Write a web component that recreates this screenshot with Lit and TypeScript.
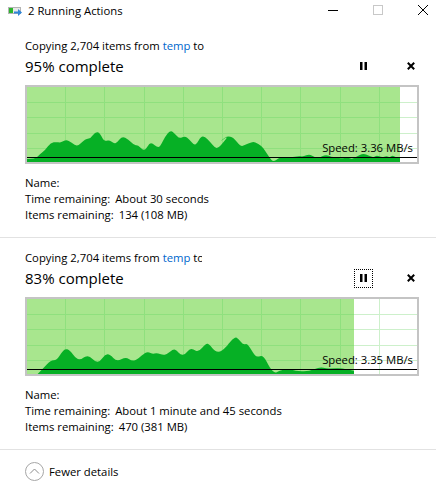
import { LitElement, html, css, svg } from "lit";
import { customElement } from "lit/decorators.js";

type P = [number, number];

const c1: P[] = [
  ...([[20,237],[46,237],[60,222],[76,210],[92,188],[110,186],[120,188],[135,181],[145,181],[165,196],[175,197],[190,182],[200,176],[212,175],[225,157],[238,156],[250,180],[258,183],[268,180],[282,191],[292,187],[306,169],[325,178],[342,196],[354,195],[368,210],[378,208],[388,190],[398,190],[410,201],[420,201],[435,170],[452,150],[465,162],[478,176],[495,168],[508,178],[522,195],[530,192],[543,169],[555,170],[570,185],[585,204],[595,204],[610,187],[625,168]] as P[]).map(([x, y]): P => [20 + x / 3, 80 + y / 3]),
  ...([[0,185],[8,178],[22,168],[40,172],[62,200],[75,195],[95,186],[105,186],[125,198],[135,212],[148,232],[160,246],[175,235],[190,230],[215,232],[235,228],[250,230],[268,222],[285,232],[295,235],[318,223],[335,232],[350,230],[362,236],[385,232],[395,238],[412,228],[430,220],[450,228],[462,232],[470,226],[485,232],[500,228],[510,232],[518,226],[526,232],[540,232]] as P[]).map(([x, y]): P => [220 + x / 3, 80 + y / 3]),
].map(([x, y]): P => [x - 25, y - 85]);

const c2: P[] = [
  ...([[50,240],[70,220],[92,196],[110,196],[125,172],[135,162],[148,164],[170,193],[185,193],[195,184],[210,184],[225,200],[240,200],[255,178],[270,178],[290,200],[318,186],[335,198],[350,195],[380,168],[395,177],[412,174],[428,180],[440,178],[460,162],[470,166],[482,180],[495,179],[508,162],[520,162],[535,172],[558,145],[568,148],[585,170],[605,170],[630,142]] as P[]).map(([x, y]): P => [20 + x / 3, 295 + y / 3]),
  ...([[20,258],[45,230],[55,236],[70,255],[82,250],[100,280],[110,292],[130,285],[150,325],[165,340],[175,333],[205,326],[225,332],[265,335],[300,320],[320,326],[340,325],[365,325],[401,332]] as P[]).map(([x, y]): P => [220 + x / 3, 260 + y / 3]),
].map(([x, y]): P => [x - 25, y - 297]);

const VX = [65, 104, 144, 183, 222, 261, 300, 340, 379].map((x) => x - 25 + 0.5);
const HY = [17, 32, 48, 63].map((y) => y + 0.5);

/* Rounds the sampled outline by running quadratic curves through segment midpoints. */
function smooth(points: P[], greenEnd: number, bottom: number) {
  const f = (n: number) => n.toFixed(1);
  const [first] = points;
  const last = points[points.length - 1];
  let d = `M${f(first[0])} ${bottom}L${f(first[0])} ${f(first[1])}`;
  for (let i = 1; i < points.length - 1; i++) {
    const [x, y] = points[i];
    const [nx, ny] = points[i + 1];
    d += `Q${f(x)} ${f(y)} ${f((x + nx) / 2)} ${f((y + ny) / 2)}`;
  }
  d += `L${f(last[0])} ${f(last[1])}L${greenEnd} ${f(last[1])}L${greenEnd} ${bottom}Z`;
  return d;
}

function chart(points: P[], greenEnd: number) {
  const bottom = 77;
  return html`<svg class="plot" width="394" height="79" viewBox="0 0 394 79">
    ${VX.map((x) => svg`<line x1=${x} x2=${x} y1="2" y2="77" stroke="#cdf0cb" />`)}
    ${HY.map((y) => svg`<line x1="2" x2="392" y1=${y} y2=${y} stroke="#cdf0cb" />`)}
    <rect x="2" y="2" width=${greenEnd - 2} height="75" fill="#a8e68e" />
    ${VX.filter((x) => x < greenEnd).map((x) => svg`<line x1=${x} x2=${x} y1="2" y2="77" stroke="#8fe07e" />`)}
    ${HY.map((y) => svg`<line x1="2" x2=${greenEnd} y1=${y} y2=${y} stroke="#8fe07e" />`)}
    <path d=${smooth(points, greenEnd, bottom)} fill="#06b025" />
    <line x1="2" x2="393" y1="72.5" y2="72.5" stroke="#000" />
  </svg>`;
}

interface Action {
  percent: number;
  clip: number;
  speed: string;
  time: string;
  items: string;
  points: P[];
  greenEnd: number;
  focused: boolean;
}

const ACTIONS: Action[] = [
  { percent: 95, clip: 182, speed: "3.36 MB/s", time: "About 30 seconds", items: "134 (108 MB)", points: c1, greenEnd: 375, focused: false },
  { percent: 83, clip: 177, speed: "3.35 MB/s", time: "About 1 minute and 45 seconds", items: "470 (381 MB)", points: c2, greenEnd: 329, focused: true },
];

@customElement("app-root")
export class AppRoot extends LitElement {
  static styles = css`
    :host {
      display: block;
      width: 436px;
      height: 487px;
      background: #fff;
      color: #000;
      font-family: "Open Sans", "Noto Sans", sans-serif;
      font-size: 11.3px;
      line-height: 16px;
      overflow: hidden;
    }
    .titlebar {
      display: flex;
      height: 26px;
      padding: 3px 8px 0 8px;
      box-sizing: border-box;
    }
    .app-icon {
      margin-top: 4px;
    }
    .title {
      margin-left: 5px;
      height: 16px;
    }
    .win {
      margin-left: auto;
      display: flex;
      gap: 35px;
      margin-top: 2px;
      align-items: flex-start;
    }
    .action {
      padding: 12px 0 14px 25px;
      border-bottom: 1px solid #e2e2e2;
      height: 212px;
      box-sizing: border-box;
    }
    .copy {
      white-space: nowrap;
      overflow: hidden;
    }
    .link {
      color: #0066cc;
    }
    .head {
      display: flex;
      align-items: center;
      height: 24px;
      margin-bottom: 7px;
    }
    .percent {
      font-size: 15px;
    }
    .tools {
      margin-left: auto;
      display: flex;
      align-items: center;
      margin-right: 16px;
      gap: 28px;
    }
    .btn {
      width: 19px;
      height: 19px;
      box-sizing: border-box;
      display: flex;
      align-items: center;
      justify-content: center;
    }
    .btn.focus {
      border: 1px dotted #000;
    }
    .chart {
      position: relative;
      width: 394px;
      height: 79px;
      box-sizing: border-box;
      margin-bottom: 11px;
    }
    .plot {
      position: absolute;
      left: 0;
      top: 0;
    }
    .frame {
      position: absolute;
      inset: 0;
      border: 2px solid #c4c4c4;
      pointer-events: none;
    }
    .speed {
      position: absolute;
      right: 6px;
      top: 55px;
      white-space: nowrap;
    }
    .gap {
      display: inline-block;
      width: 5px;
    }
    .footer {
      display: flex;
      align-items: center;
      gap: 5px;
      padding: 12px 0 0 25px;
    }
    svg {
      display: block;
    }
  `;

  private action(a: Action) {
    return html`<section class="action">
      <div class="copy" style="width:${a.clip}px">Copying 2,704 items from <span class="link">temp</span> to</div>
      <div class="head">
        <span class="percent">${a.percent}% complete</span>
        <div class="tools">
          <div class="btn ${a.focused ? "focus" : ""}">
            <svg width="7" height="8" viewBox="0 0 7 8"><path d="M0 0h2.5v8H0zM4.5 0H7v8H4.5z" fill="#000" /></svg>
          </div>
          <div class="btn">
            <svg width="8" height="8" viewBox="0 0 8 8"><path d="M0.8 0.8 7.2 7.2M7.2 0.8 0.8 7.2" stroke="#000" stroke-width="2" fill="none" /></svg>
          </div>
        </div>
      </div>
      <div class="chart">
        ${chart(a.points, a.greenEnd)}
        <div class="frame"></div>
        <div class="speed">Speed: ${a.speed}</div>
      </div>
      <div>Name:</div>
      <div>Time remaining:<span class="gap"></span>${a.time}</div>
      <div>Items remaining:<span class="gap"></span>${a.items}</div>
    </section>`;
  }

  render() {
    return html`
      <header class="titlebar">
        <svg class="app-icon" width="15" height="10" viewBox="0 0 15 10">
          <rect x="0.5" y="0.5" width="12" height="6" fill="#e8e8e8" stroke="#b4b4b4" />
          <rect x="1" y="1" width="4" height="5" fill="#2cb52c" />
          <path d="M6 4.5h4V2l4 3.5L10 9V6.5H6z" fill="#2f86d8" />
        </svg>
        <div class="title">2 Running Actions</div>
        <div class="win">
          <svg width="10" height="10" viewBox="0 0 10 10"><path d="M0 5.5h10" stroke="#000" /></svg>
          <svg width="10" height="10" viewBox="0 0 10 10"><rect x="0.5" y="0.5" width="9" height="9" fill="none" stroke="#c8c8c8" /></svg>
          <svg width="10" height="10" viewBox="0 0 10 10"><path d="M0 0 10 10M10 0 0 10" stroke="#000" stroke-width="1" fill="none" /></svg>
        </div>
      </header>
      ${ACTIONS.map((a) => this.action(a))}
      <footer class="footer">
        <svg width="19" height="19" viewBox="0 0 19 19">
          <circle cx="9.5" cy="9.5" r="9" fill="none" stroke="#a6a6a6" />
          <path d="M5 11.5 9.5 7 14 11.5" fill="none" stroke="#8c8c8c" />
        </svg>
        <span>Fewer details</span>
      </footer>
    `;
  }
}
